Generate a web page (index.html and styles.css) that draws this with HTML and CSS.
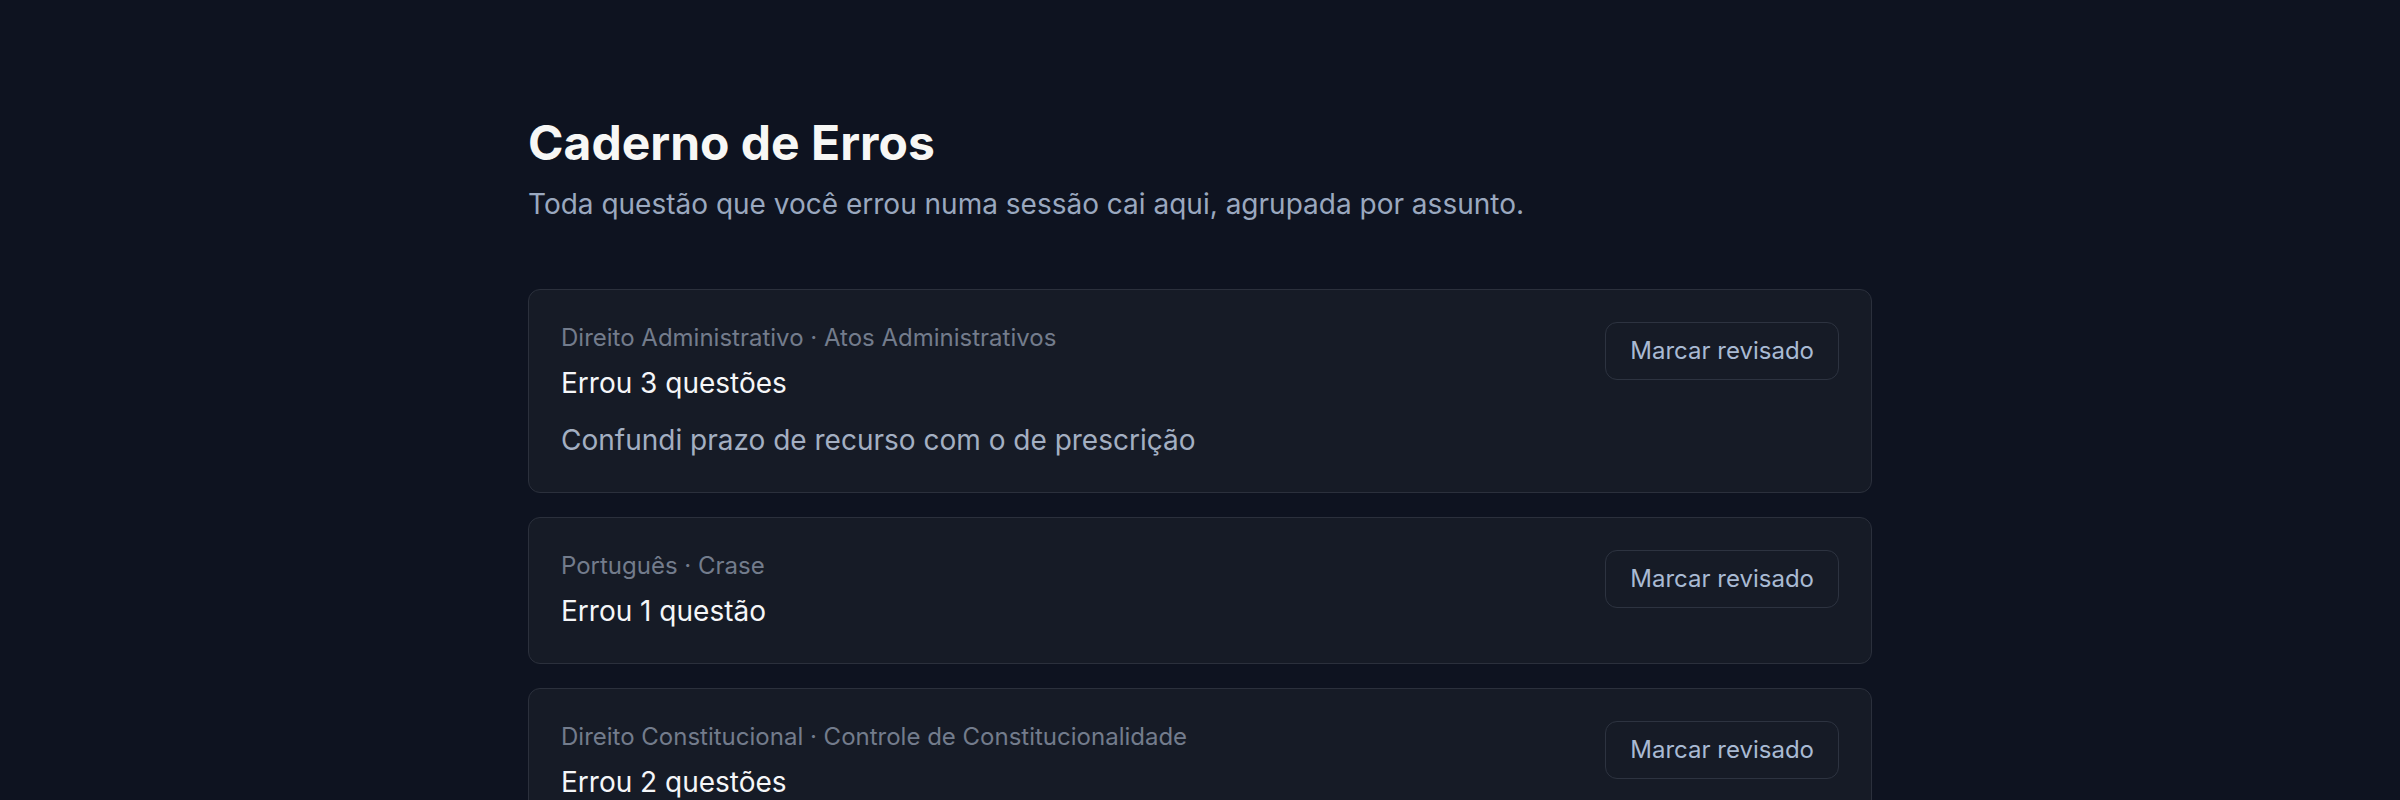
FILE: index.html
```html
<!DOCTYPE html>
<html lang="pt-BR">
<head>
<meta charset="utf-8">
<title>Caderno de Erros</title>
<link rel="stylesheet" href="styles.css">
</head>
<body>
<main class="page">
  <header class="page-head">
    <h1 class="page-title">Caderno de Erros</h1>
    <p class="page-sub">Toda questão que você errou numa sessão cai aqui, agrupada por assunto.</p>
  </header>
  <section class="list">
    <article class="card">
      <div class="card-body">
        <div class="card-meta">Direito Administrativo · Atos Administrativos</div>
        <div class="card-count">Errou 3 questões</div>
        <div class="card-note">Confundi prazo de recurso com o de prescrição</div>
      </div>
      <button class="btn" type="button">Marcar revisado</button>
    </article>
    <article class="card">
      <div class="card-body">
        <div class="card-meta">Português · Crase</div>
        <div class="card-count">Errou 1 questão</div>
      </div>
      <button class="btn" type="button">Marcar revisado</button>
    </article>
    <article class="card">
      <div class="card-body">
        <div class="card-meta">Direito Constitucional · Controle de Constitucionalidade</div>
        <div class="card-count">Errou 2 questões</div>
      </div>
      <button class="btn" type="button">Marcar revisado</button>
    </article>
  </section>
</main>
</body>
</html>
```
FILE: styles.css
```css
html, body {
  margin: 0;
  padding: 0;
}
body {
  background: #0e1320;
  font-family: Inter, "Noto Sans", sans-serif;
  color: #f3f4f6;
}
.page {
  max-width: 1344px;
  margin: 0 auto;
  padding-top: 115px;
}
.page-head {
  display: flex;
  flex-direction: column;
  gap: 13px;
}
.page-title {
  margin: 0;
  font-size: 48px;
  line-height: 56px;
  font-weight: 700;
  color: #f7f7f5;
}
.page-sub {
  margin: 0;
  font-size: 28px;
  line-height: 40px;
  color: #9aa8bf;
}
.list {
  margin-top: 65px;
  display: flex;
  flex-direction: column;
  gap: 24px;
}
.card {
  display: flex;
  align-items: flex-start;
  justify-content: space-between;
  gap: 24px;
  background: #161b26;
  border: 1px solid #2b303c;
  border-radius: 12px;
  padding: 32px;
}
.card-body {
  display: flex;
  flex-direction: column;
}
.card-meta {
  font-size: 24px;
  line-height: 32px;
  color: #737c8c;
}
.card-count {
  margin-top: 9px;
  font-size: 28px;
  line-height: 40px;
  color: #f5f6f8;
}
.card-note {
  margin-top: 17px;
  font-size: 28px;
  line-height: 40px;
  color: #a3afc2;
}
.btn {
  flex: none;
  font-family: inherit;
  font-size: 24px;
  line-height: 36px;
  padding: 10px 24px;
  background: transparent;
  color: #a9bad3;
  border: 1px solid #2d3340;
  border-radius: 12px;
}
```
